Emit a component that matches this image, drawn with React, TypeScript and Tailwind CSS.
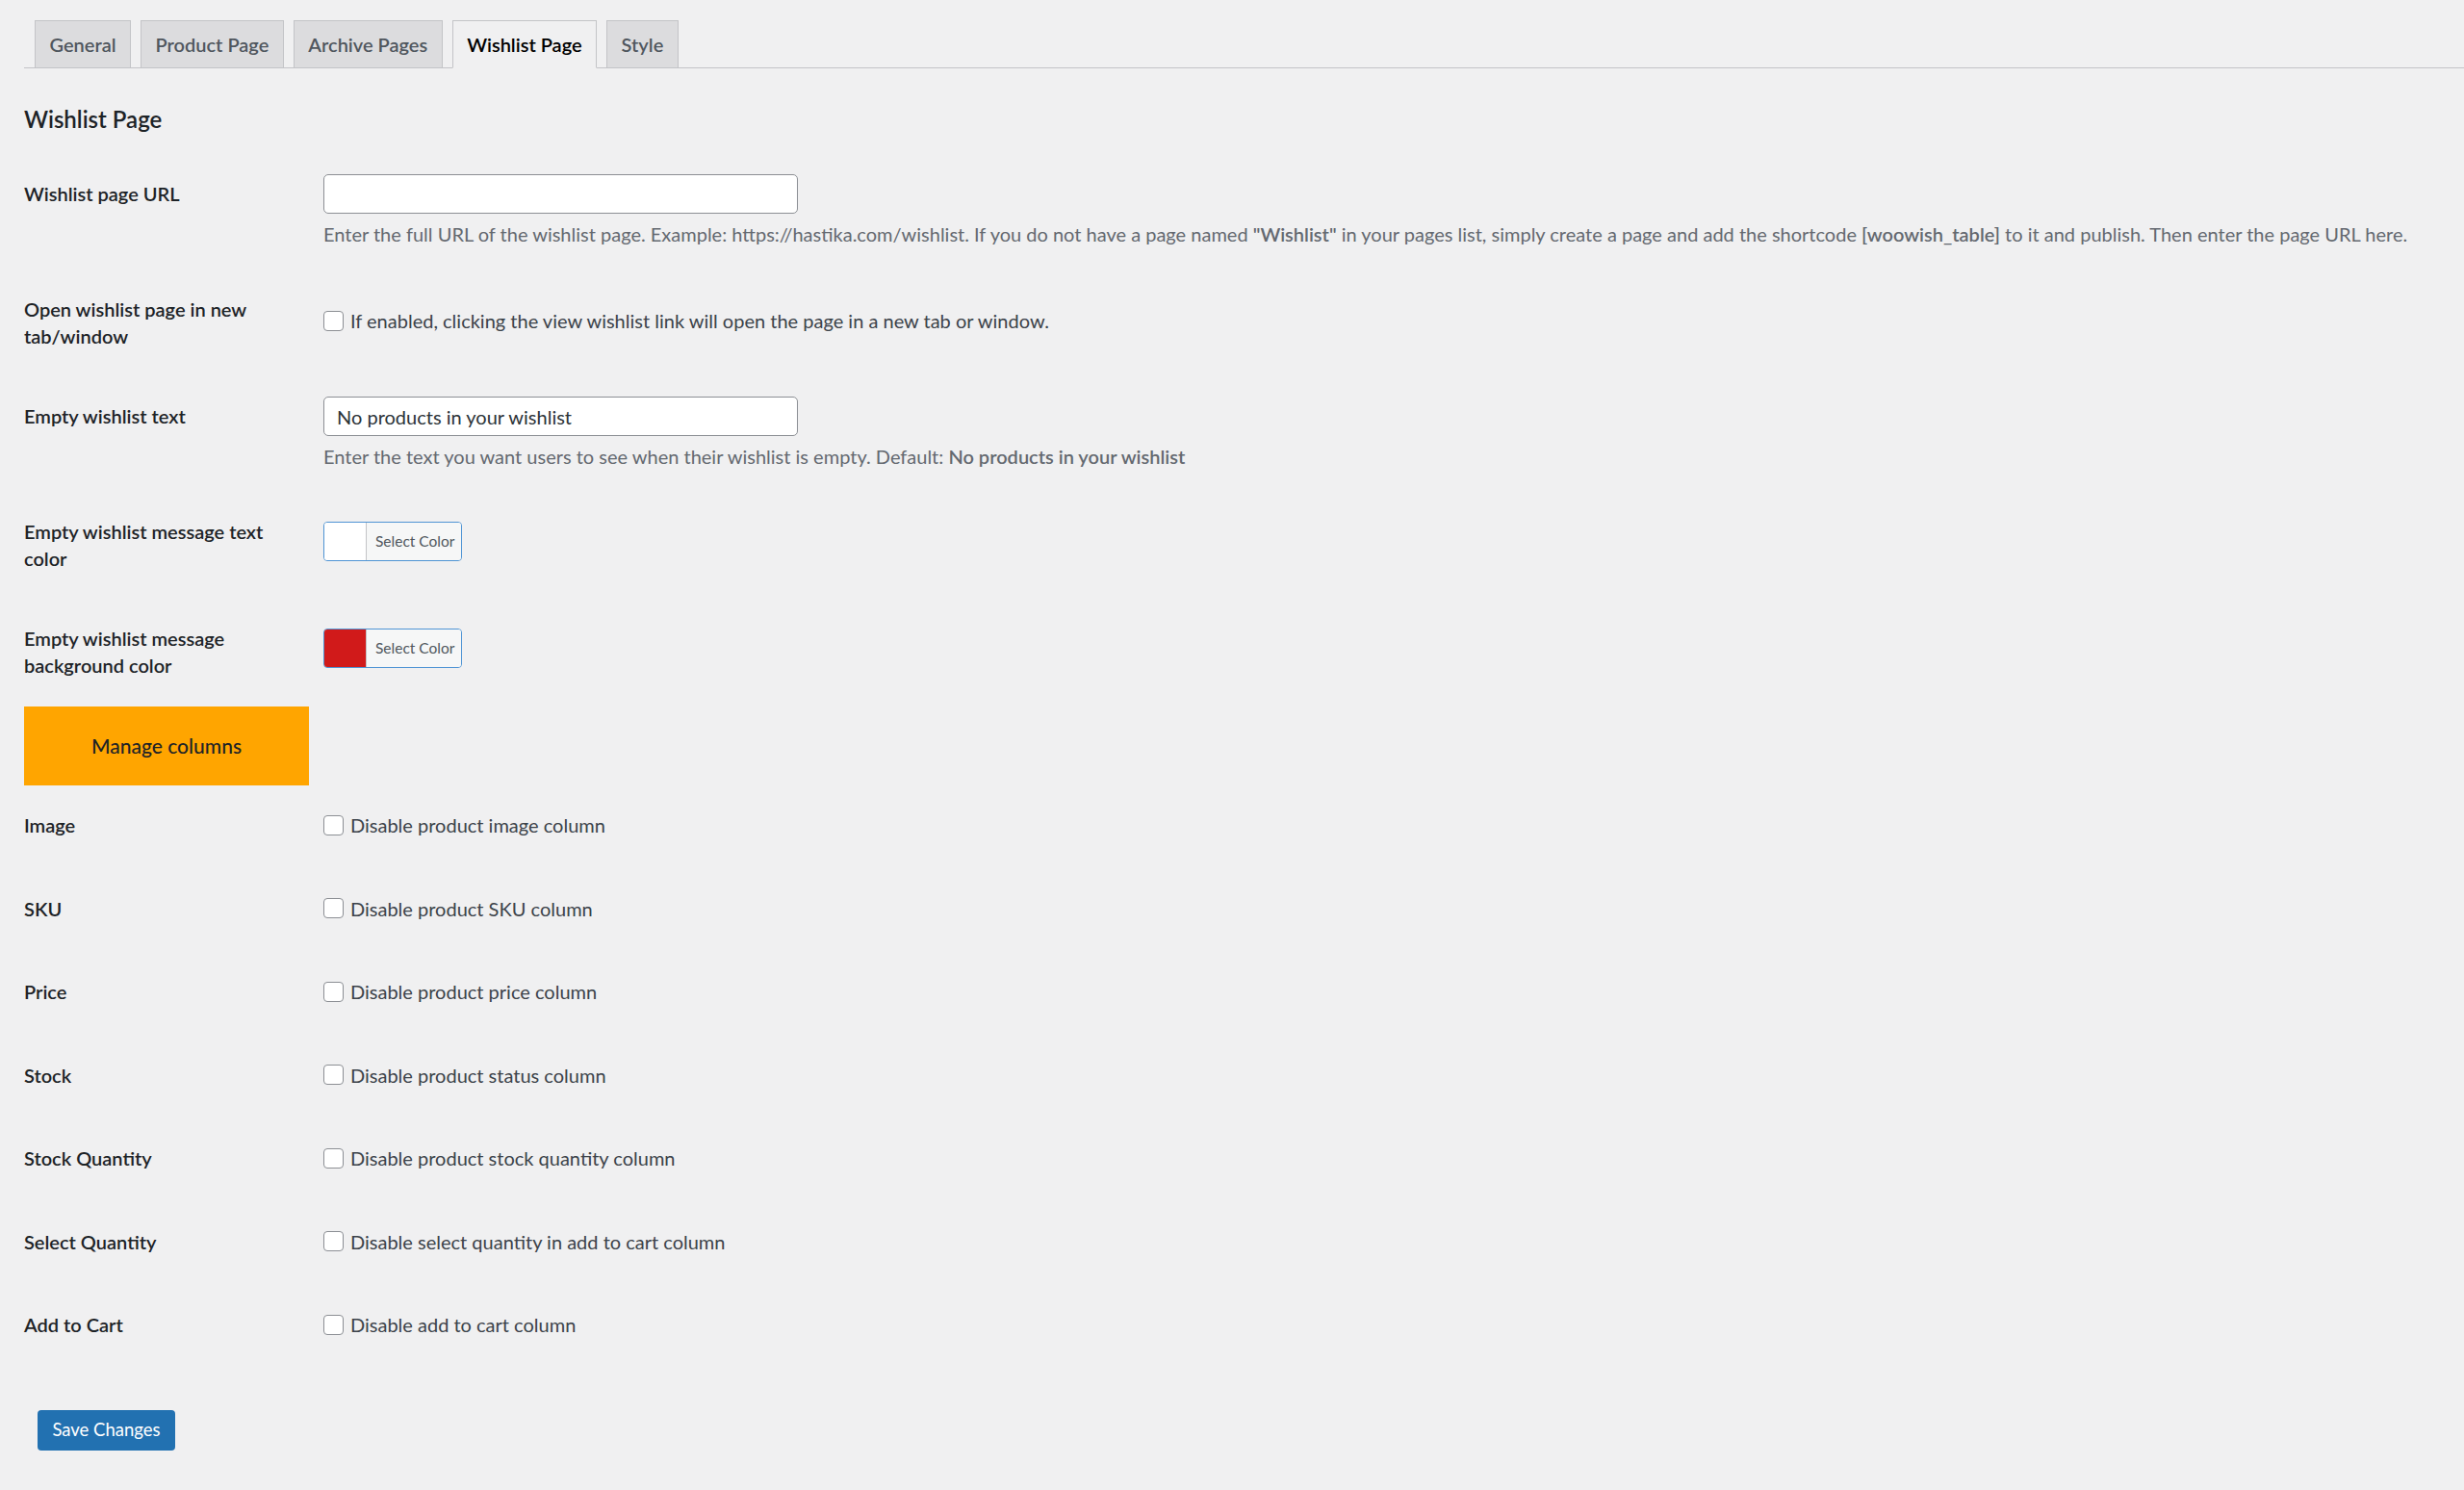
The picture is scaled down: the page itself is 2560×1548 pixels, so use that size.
import { useState } from "react"

const tabs = ["General", "Product Page", "Archive Pages", "Wishlist Page", "Style"]

const columns = [
  { key: "image", label: "Image", text: "Disable product image column" },
  { key: "sku", label: "SKU", text: "Disable product SKU column" },
  { key: "price", label: "Price", text: "Disable product price column" },
  { key: "stock", label: "Stock", text: "Disable product status column" },
  { key: "stock_qty", label: "Stock Quantity", text: "Disable product stock quantity column" },
  { key: "select_qty", label: "Select Quantity", text: "Disable select quantity in add to cart column" },
  { key: "add_to_cart", label: "Add to Cart", text: "Disable add to cart column" },
]

function Checkbox({ checked, onChange }: { checked: boolean; onChange: (v: boolean) => void }) {
  return (
    <input
      type="checkbox"
      checked={checked}
      onChange={e => onChange(e.target.checked)}
      className="appearance-none w-[21px] h-[21px] shrink-0 rounded-[4px] border border-[#8c8f94] bg-white checked:bg-[#2271b1]"
    />
  )
}

function ColorButton({ color }: { color: string }) {
  return (
    <button className="flex h-[41px] w-[144px] overflow-hidden rounded-[4px] border border-[#4f94d4]">
      <span className="w-[43px] h-full" style={{ backgroundColor: color }} />
      <span className="flex-1 h-full flex items-center pl-[9px] border-l border-[#c3c4c7] bg-[#f6f7f7] text-[15.5px] text-[#50575e]">
        Select Color
      </span>
    </button>
  )
}

export default function App() {
  const [activeTab, setActiveTab] = useState("Wishlist Page")
  const [newTab, setNewTab] = useState(false)
  const [url, setUrl] = useState("")
  const [emptyText, setEmptyText] = useState("No products in your wishlist")
  const [disabled, setDisabled] = useState<Record<string, boolean>>({})

  const labelClass = "w-[311px] shrink-0 pt-[27px] pb-[28px] text-[20px] leading-[28px] font-semibold text-[#1d2327]"

  return (
    <div className="min-h-screen bg-[#f0f0f1] pl-[25px] pb-[40px] font-['Lato','Liberation_Sans',sans-serif] text-[#3c434a]">
      {/* Tabs */}
      <div className="flex gap-[10px] pl-[11px] pt-[21px] border-b border-[#c3c4c7]">
        {tabs.map(tab => (
          <button
            key={tab}
            onClick={() => setActiveTab(tab)}
            className={
              tab === activeTab
                ? "-mb-px h-[50px] px-[14.5px] border border-[#c3c4c7] border-b-[#f0f0f1] bg-[#f0f0f1] text-[20px] font-semibold text-black"
                : "-mb-px h-[50px] px-[14.5px] border border-[#c3c4c7] bg-[#dcdcde] text-[20px] font-semibold text-[#50575e]"
            }
          >
            {tab}
          </button>
        ))}
      </div>

      <h2 className="mt-[37px] text-[24px] leading-[32px] font-semibold text-[#1d2327]">Wishlist Page</h2>

      <div className="mt-[20px]">
        {/* Wishlist page URL */}
        <div className="flex">
          <div className={labelClass}>Wishlist page URL</div>
          <div className="pt-[21px] pb-[23px]">
            <input
              type="text"
              value={url}
              onChange={e => setUrl(e.target.value)}
              className="w-[493px] h-[41px] rounded-[5px] border border-[#8c8f94] bg-white px-[13px] text-[20px] text-[#2c3338] outline-none"
            />
            <p className="mt-[7px] text-[20px] leading-[28px] text-[#646970] whitespace-nowrap">
              Enter the full URL of the wishlist page. Example: https://hastika.com/wishlist. If you do not have a page named{" "}
              <strong className="font-semibold">"Wishlist"</strong> in your pages list, simply create a page and add the shortcode{" "}
              <strong className="font-semibold">[woowish_table]</strong> to it and publish. Then enter the page URL here.
            </p>
          </div>
        </div>

        {/* Open in new tab */}
        <div className="flex">
          <div className={labelClass}>
            Open wishlist page in new
            <br />
            tab/window
          </div>
          <label className="pt-[39px] flex items-start">
            <span className="flex items-center gap-[7px] h-[28px] text-[20px]">
              <Checkbox checked={newTab} onChange={setNewTab} />
              If enabled, clicking the view wishlist link will open the page in a new tab or window.
            </span>
          </label>
        </div>

        {/* Empty wishlist text */}
        <div className="flex">
          <div className={labelClass}>Empty wishlist text</div>
          <div className="pt-[21px] pb-[23px]">
            <input
              type="text"
              value={emptyText}
              onChange={e => setEmptyText(e.target.value)}
              className="w-[493px] h-[41px] rounded-[5px] border border-[#8c8f94] bg-white px-[13px] text-[20px] text-[#2c3338] outline-none"
            />
            <p className="mt-[7px] text-[20px] leading-[28px] text-[#646970] whitespace-nowrap">
              Enter the text you want users to see when their wishlist is empty. Default:{" "}
              <strong className="font-semibold">No products in your wishlist</strong>
            </p>
          </div>
        </div>

        {/* Colors */}
        <div className="flex">
          <div className={labelClass}>
            Empty wishlist message text
            <br />
            color
          </div>
          <div className="pt-[31px]">
            <ColorButton color="#ffffff" />
          </div>
        </div>

        <div className="flex">
          <div className={labelClass}>
            Empty wishlist message
            <br />
            background color
          </div>
          <div className="pt-[31px]">
            <ColorButton color="#d11a1a" />
          </div>
        </div>

        <div className="mt-px w-[296px] h-[82px] bg-[#ffa500] flex items-center justify-center text-[21px] font-medium text-[#1d2327]">
          Manage columns
        </div>

        {columns.map(col => (
          <div key={col.key} className="flex h-[86.5px]">
            <div className={labelClass}>{col.label}</div>
            <label className="pt-[27px]">
              <span className="flex items-center gap-[7px] h-[28px] text-[20px]">
                <Checkbox
                  checked={!!disabled[col.key]}
                  onChange={v => setDisabled(prev => ({ ...prev, [col.key]: v }))}
                />
                {col.text}
              </span>
            </label>
          </div>
        ))}
      </div>

      <button className="mt-[43.5px] ml-[14px] h-[42px] w-[143px] rounded-[4px] bg-[#2271b1] text-[18.5px] text-white">
        Save Changes
      </button>
    </div>
  )
}
